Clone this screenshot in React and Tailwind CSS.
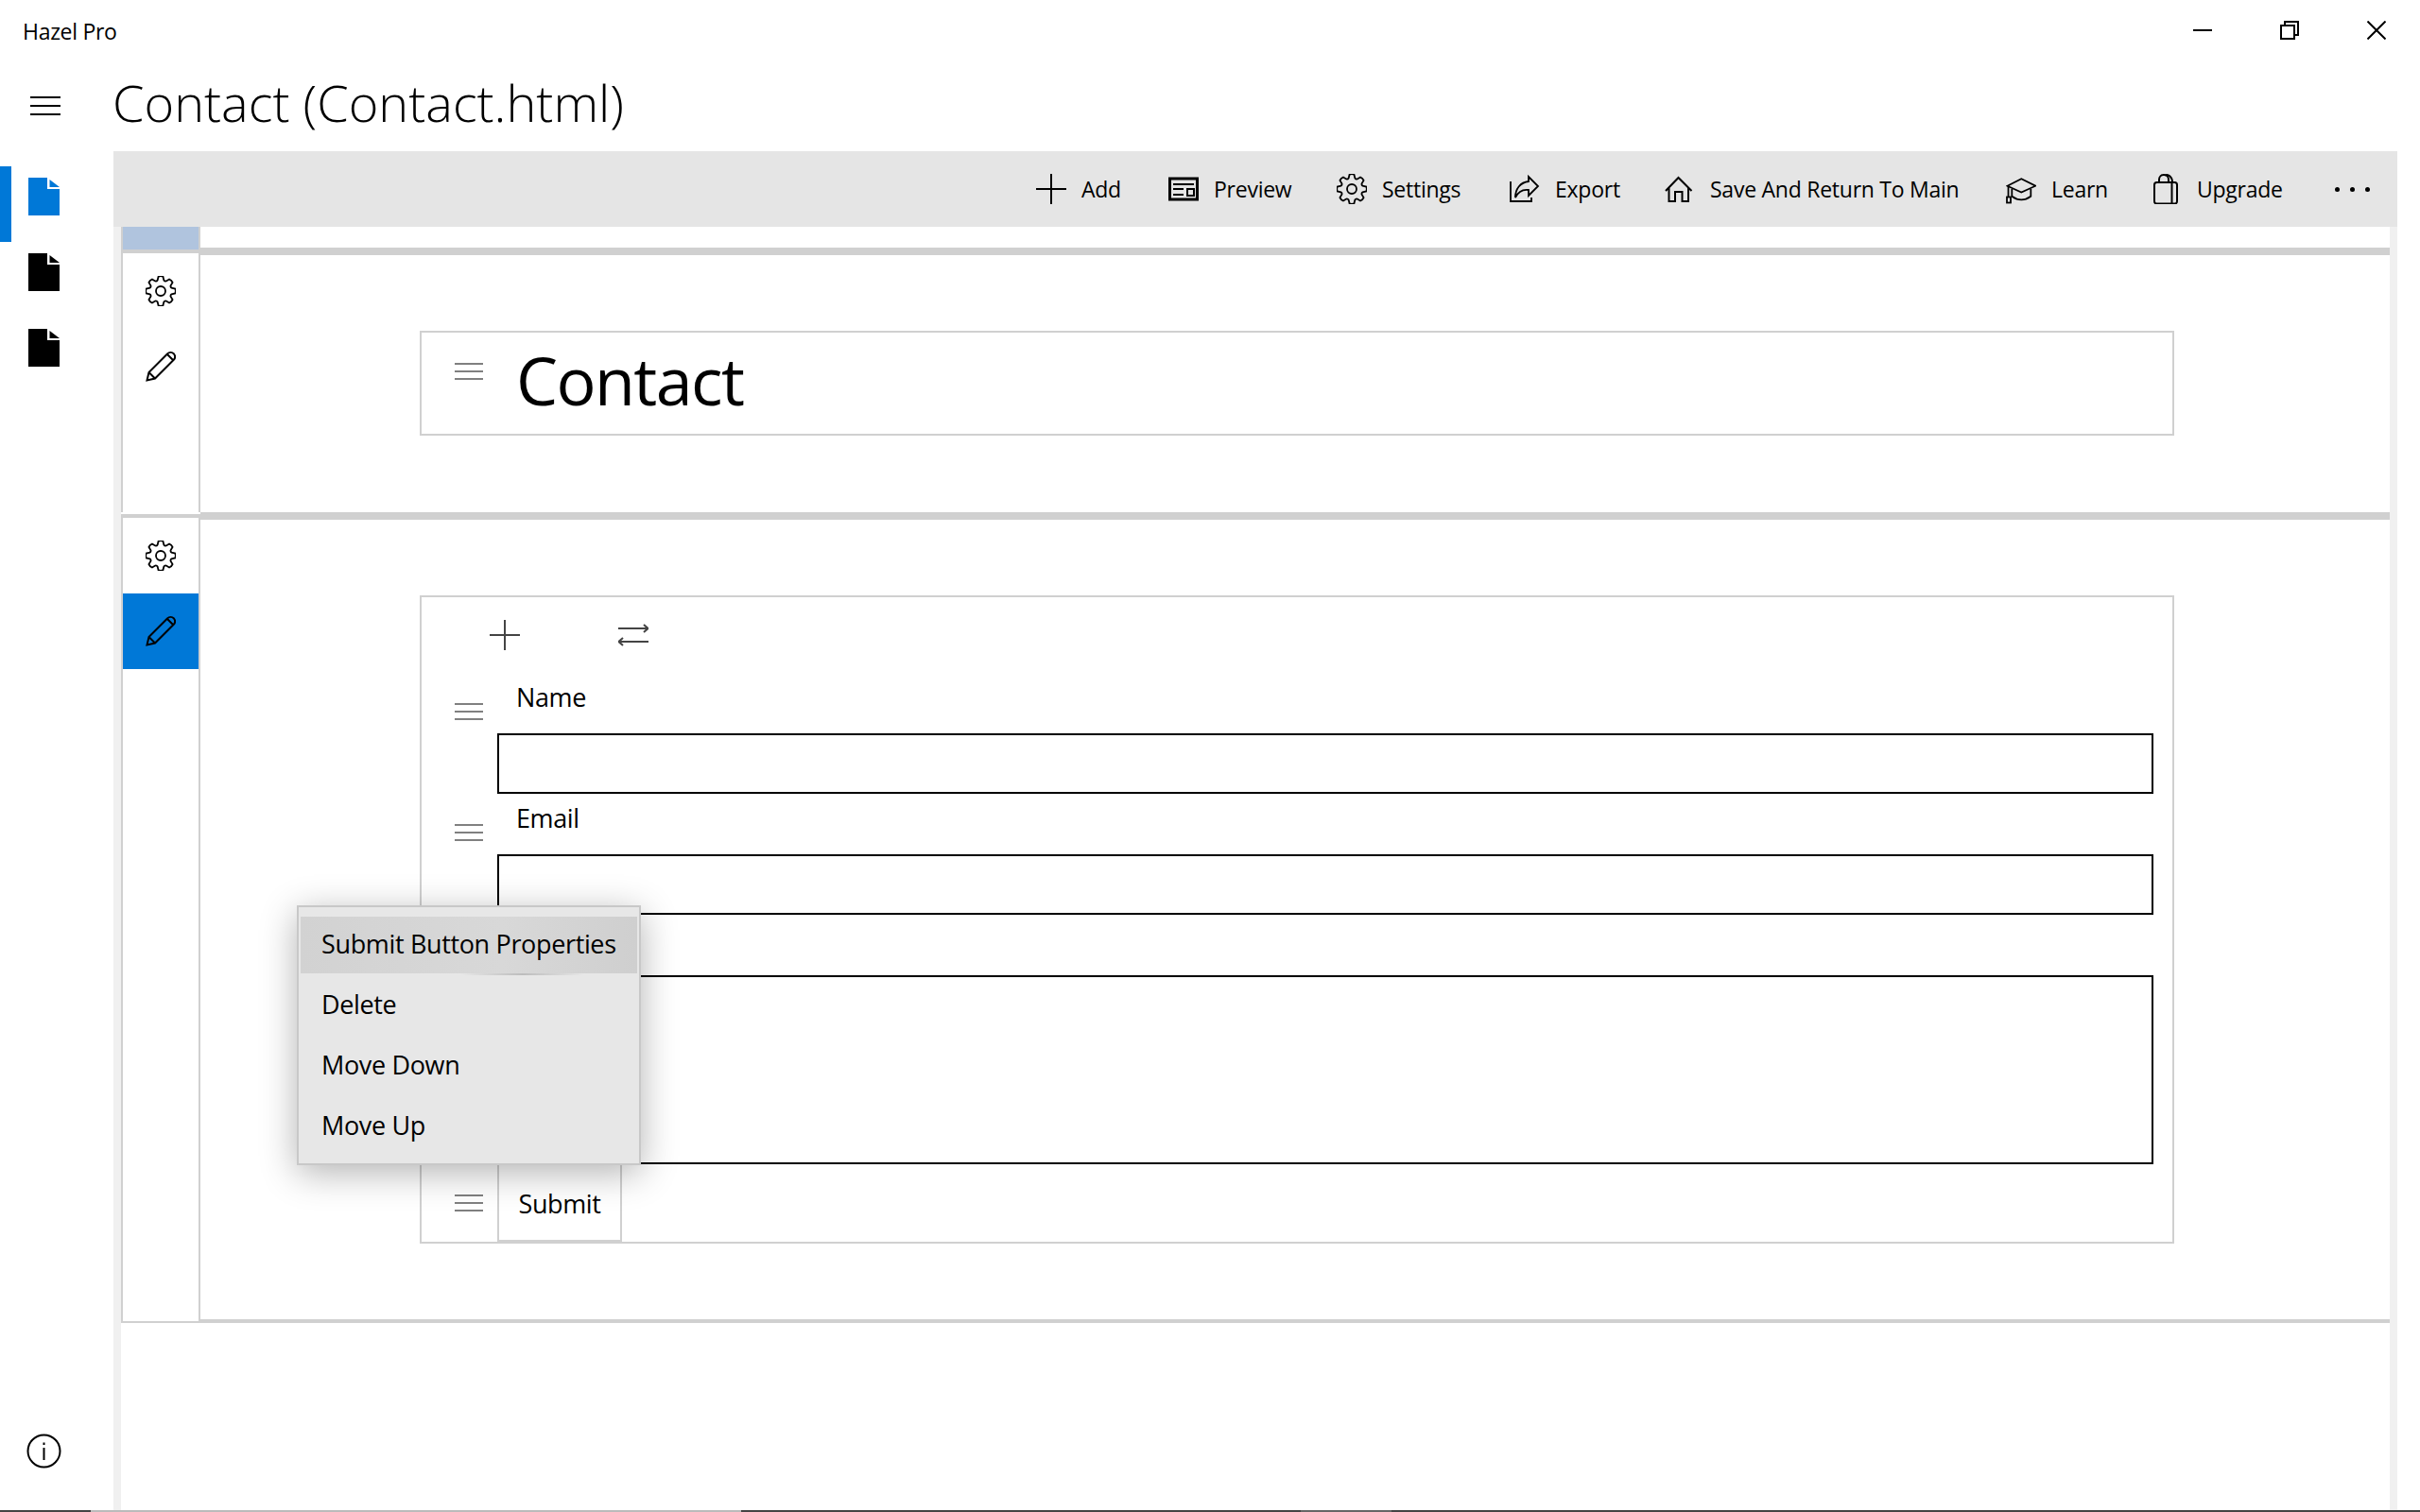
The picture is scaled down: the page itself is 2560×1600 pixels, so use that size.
import React from 'react';

const gearPath = (teeth = 8, outer = 15.5, inner = 12, hole = 5) => {
    // outline of the gear, one tooth at a time
    const pts = [];
    const step = (Math.PI * 2) / teeth;
    for (let i = 0; i < teeth; i++) {
        const a = i * step - Math.PI / 2;
        const at = (r, o) => `${(16 + r * Math.cos(a + o)).toFixed(2)} ${(16 + r * Math.sin(a + o)).toFixed(2)}`;
        pts.push(`${i === 0 ? 'M' : 'L'}${at(inner, -step * 0.36)}`);
        pts.push(`L${at(outer, -step * 0.2)}`);
        pts.push(`Q${at(outer + 0.8, 0)} ${at(outer, step * 0.2)}`);
        pts.push(`L${at(inner, step * 0.36)}`);
        pts.push(`Q${at(inner - 1, step * 0.5)} ${at(inner, step * 0.64)}`);
    }
    return `${pts.join(' ')} Z M${16 - hole} 16 a${hole} ${hole} 0 1 0 ${hole * 2} 0 a${hole} ${hole} 0 1 0 ${-hole * 2} 0 Z`;
};

const Icon = ({ className = '', children, w = 32, h = 32, sw = 2 }) => (
    <svg width={w} height={h} viewBox={`0 0 ${w} ${h}`} fill="none" stroke="currentColor" strokeWidth={sw} className={`shrink-0 ${className}`}>
        {children}
    </svg>
);

const Gear = ({ className }) => <Icon className={className} sw={1.8}><path d={gearPath()} /></Icon>;
const Pencil = () => (
    <Icon sw={2}>
        <path d="M1.5 30.5 L3.5 22 L23 2.5 C25 0.5 28 0.5 30 2.5 C31.5 4.5 31.5 7 29.5 9 L10 28.5 Z M3.5 22 L10 28.5 M23 3 L29 9" />
    </Icon>
);
const Plus = () => <Icon><path d="M16 0 V32 M0 16 H32" /></Icon>;
const Preview = () => (
    <Icon>
        <rect x="1.5" y="5" width="29" height="22" strokeWidth="3" />
        <path d="M5 11 H27 M5 16 H16 M5 22 H16" />
        <rect x="20" y="16" width="7" height="7" />
    </Icon>
);
const Export = () => (
    <Icon sw={1.8}>
        <path d="M6 25 C6 16 11 9 20 8 L20 3 L30 13 L20 23 L20 17 C13 16 9 19 6 25 Z" />
        <path d="M1 8 V29 H23 V25" />
    </Icon>
);
const Home = () => (
    <Icon>
        <path d="M1 18 L14.5 4 L28.5 18 M4.5 15 V29 H11 V19 H18.5 V29 H25 V15" />
    </Icon>
);
const Learn = () => (
    <Icon sw={1.8}>
        <path d="M1.5 12.7 L16.3 5.3 L31.3 12.7 L16.3 19.5 Z" />
        <path d="M6.3 16 V23.7 Q16.3 31 26.3 23.7 V16" />
        <path d="M2.5 13 V24" />
        <rect x="1" y="24.5" width="4" height="6" />
    </Icon>
);
const Bag = () => (
    <Icon>
        <rect x="1" y="9" width="24" height="22.5" rx="2.5" />
        <path d="M19.5 9 V31 M6 9 V6 a5 5 0 0 1 10 0 V9 M12 1.5 C16 0 20 3 20 9" />
    </Icon>
);
const Lines = () => (
    <div className="flex flex-col gap-[6px] w-[30px]">
        <div className="h-[2px] bg-[#808080]" />
        <div className="h-[2px] bg-[#808080]" />
        <div className="h-[2px] bg-[#808080]" />
    </div>
);
const FileIcon = ({ className }) => (
    <svg width="33" height="40" viewBox="0 0 33 40" className={className} fill="currentColor">
        <path d="M0 0 H20 V12 H33 V40 H0 Z" />
        <path d="M22.5 2 L33 10 H22.5 Z" />
    </svg>
);

const tools = [
    { label: 'Add', icon: <Plus />, w: 'w-[140px]', gap: 'gap-[16px]' },
    { label: 'Preview', icon: <Preview />, w: 'w-[178px]', gap: 'gap-[16px]' },
    { label: 'Settings', icon: <Gear />, w: 'w-[183px]', gap: 'gap-[16px]' },
    { label: 'Export', icon: <Export />, w: 'w-[164px]', gap: 'gap-[16px]' },
    { label: 'Save And Return To Main', icon: <Home />, w: 'w-[361px]', gap: 'gap-[16px]' },
    { label: 'Learn', icon: <Learn />, w: 'w-[156px]', gap: 'gap-[16px]' },
    { label: 'Upgrade', icon: <Bag />, w: 'w-[192px]', gap: 'gap-[14px]' },
];

const FieldRow = ({ label, inputClass }) => (
    <div className="flex">
        <div className="w-[35px] shrink-0" />
        <div className="w-[45px] shrink-0 pt-[32px]"><Lines /></div>
        <div className="flex-1 mr-[20px]">
            <div className="h-[64px] pl-[20px] pb-[14px] flex items-center text-[27px] leading-none tracking-[-0.4px]">{label}</div>
            <div className={`border-2 border-black ${inputClass}`} />
        </div>
    </div>
);

const menuItems = ['Submit Button Properties', 'Delete', 'Move Down', 'Move Up'];

export default function App() {
    return (
        <div className="w-screen h-screen flex flex-col overflow-hidden bg-white text-black font-['Open_Sans',sans-serif]">
            <div className="flex-1 min-h-0 flex flex-col">
                {/* Title bar */}
                <div className="h-[64px] shrink-0 flex items-start justify-between">
                    <div className="pl-[24px] pt-[19px] text-[23px] leading-[28px] tracking-[-0.3px]">Hazel Pro</div>
                    <div className="flex items-center pt-[22px] pr-[36px]">
                        <div className="w-[20px] h-[2px] bg-black mr-[72px]" />
                        <svg width="20" height="20" viewBox="0 0 20 20" fill="none" stroke="black" strokeWidth="2" className="mr-[72px]">
                            <rect x="1" y="5" width="14" height="14" />
                            <path d="M5 5 V1 H19 V15 H15" />
                        </svg>
                        <svg width="20" height="20" viewBox="0 0 20 20" fill="none" stroke="black" strokeWidth="2">
                            <path d="M0.5 0.5 L19.5 19.5 M19.5 0.5 L0.5 19.5" />
                        </svg>
                    </div>
                </div>

                <div className="flex-1 min-h-0 flex">
                    {/* Nav rail */}
                    <div className="w-[120px] shrink-0 flex flex-col">
                        <div className="h-[80px] mt-[8px] pl-[32px] flex items-center">
                            <div className="w-[32px] flex flex-col gap-[7px]">
                                <div className="h-[2px] bg-black" />
                                <div className="h-[2px] bg-black" />
                                <div className="h-[2px] bg-black" />
                            </div>
                        </div>
                        <div className="mt-[24px] h-[80px] border-l-[12px] border-[#0078d7] pl-[18px] pt-[12px] text-[#0078d7]"><FileIcon /></div>
                        <div className="h-[80px] pl-[30px] pt-[12px]"><FileIcon /></div>
                        <div className="h-[80px] pl-[30px] pt-[12px]"><FileIcon /></div>
                        <div className="mt-auto h-[80px] mb-[23px] pl-[28px] flex items-center">
                            <svg width="37" height="37" viewBox="0 0 37 37" fill="none" stroke="black" strokeWidth="2">
                                <circle cx="18.5" cy="18.5" r="17" />
                                <path d="M18.5 15 V28 M18.5 9.5 V12" />
                            </svg>
                        </div>
                    </div>

                    {/* Main column */}
                    <div className="flex-1 min-w-0 flex flex-col">
                        <div className="h-[96px] shrink-0 pb-[8px] flex items-center font-light text-[54px] leading-none -ml-[1px]">Contact (Contact.html)</div>

                        {/* Command bar */}
                        <div className="h-[80px] shrink-0 w-[2416px] bg-[#e5e5e5] flex items-center pl-[976px] text-[23px] tracking-[-0.25px]">
                            {tools.map((t) => (
                                <div key={t.label} className={`flex items-center shrink-0 ${t.gap} ${t.w}`}>
                                    {t.icon}
                                    <span className="whitespace-nowrap">{t.label}</span>
                                </div>
                            ))}
                            <div className="flex gap-[11px]">
                                <div className="w-[5px] h-[5px] rounded-full bg-black" />
                                <div className="w-[5px] h-[5px] rounded-full bg-black" />
                                <div className="w-[5px] h-[5px] rounded-full bg-black" />
                            </div>
                        </div>

                        {/* Page sections */}
                        <div className="flex-1 min-h-0 w-[2416px] bg-[#f0f0f0] px-[8px]">
                            <div className="h-full bg-white flex flex-col">
                                <div className="h-[22px] shrink-0 flex">
                                    <div className="w-[84px] h-[24px] border-x-2 border-[#d0d0d0] bg-[#b0c4de]" />
                                </div>

                                {/* Title section */}
                                <div className="flex shrink-0">
                                    <div className="w-[84px] shrink-0 mt-[2px] border-x-2 border-t-4 border-[#d0d0d0] flex flex-col">
                                        <div className="h-[80px] flex items-center justify-center"><Gear /></div>
                                        <div className="h-[80px] flex items-center justify-center"><Pencil /></div>
                                    </div>
                                    <div className="flex-1 border-t-8 border-[#d0d0d0] pt-[80px] pb-[81px] pl-[232px] pr-[228px]">
                                        <div className="h-[111px] border-2 border-[#d0d0d0] flex items-start">
                                            <div className="ml-[35px] mt-[32px] w-[65px]"><Lines /></div>
                                            <div className="text-[70px] leading-[100px] tracking-[-1.6px]">Contact</div>
                                        </div>
                                    </div>
                                </div>

                                {/* Form section */}
                                <div className="flex shrink-0">
                                    <div className="w-[84px] shrink-0 mt-[2px] border-x-2 border-t-4 border-b-2 border-[#d0d0d0] flex flex-col">
                                        <div className="h-[80px] flex items-center justify-center"><Gear /></div>
                                        <div className="h-[80px] flex items-center justify-center bg-[#0078d7]"><Pencil /></div>
                                    </div>
                                    <div className="flex-1 border-t-8 border-b-4 border-[#d0d0d0] pt-[80px] pb-[80px] pl-[232px] pr-[228px]">
                                        <div className="relative h-[686px] border-2 border-[#d0d0d0] flex flex-col">
                                            <div className="h-[80px] flex items-center pl-[72px] text-[#444444]">
                                                <Plus />
                                                <svg width="32" height="32" viewBox="0 0 32 32" fill="none" stroke="currentColor" strokeWidth="2" className="ml-[104px]">
                                                    <path d="M0 9 H31 M27 5 L31.5 9 L27 13 M32 23 H1 M5 19 L0.5 23 L5 27" />
                                                </svg>
                                            </div>
                                            <FieldRow label="Name" inputClass="h-[64px]" />
                                            <FieldRow label="Email" inputClass="h-[64px]" />
                                            <FieldRow label="Message" inputClass="h-[200px]" />
                                            <div className="flex flex-1 min-h-0">
                                                <div className="w-[35px] shrink-0" />
                                                <div className="w-[45px] shrink-0 pt-[32px]"><Lines /></div>
                                                <div className="w-[132px] pt-[5px] border-2 border-t-0 border-[#d0d0d0] flex items-center justify-center text-[27px] tracking-[-0.4px]">Submit</div>
                                            </div>

                                            {/* Context menu */}
                                            <div className="absolute left-[-132px] top-[326px] w-[364px] h-[275px] border-2 border-[#c8c8c8] bg-[#e7e7e7] pt-[10px] px-[2px] shadow-[0_8px_36px_rgba(0,0,0,0.3)] text-[27px] tracking-[-0.35px]">
                                                {menuItems.map((m, i) => (
                                                    <div key={m} className={`relative h-[60px] mb-[4px] pb-[2px] flex items-center pl-[22px] whitespace-nowrap ${i === 0 ? 'bg-[linear-gradient(90deg,#d2d2d2,#d8d8d8_60%,#cfcfcf)]' : ''}`}>
                                                        {m}
                                                        {i === 0 && <div className="absolute left-[170px] -bottom-[2px] w-[130px] h-[2px] bg-[linear-gradient(90deg,transparent,#bdbdbd,transparent)]" />}
                                                    </div>
                                                ))}
                                            </div>
                                        </div>
                                    </div>
                                </div>
                                <div className="flex-1" />
                            </div>
                        </div>
                    </div>
                </div>
            </div>

            {/* Taskbar edge */}
            <div className="h-[2px] shrink-0 flex bg-[#444444]">
                <div className="w-[96px]" />
                <div className="w-[688px] bg-[#bbbbbb]" />
                <div className="w-[592px]" />
                <div className="w-[96px] bg-[#666666]" />
            </div>
        </div>
    );
}
